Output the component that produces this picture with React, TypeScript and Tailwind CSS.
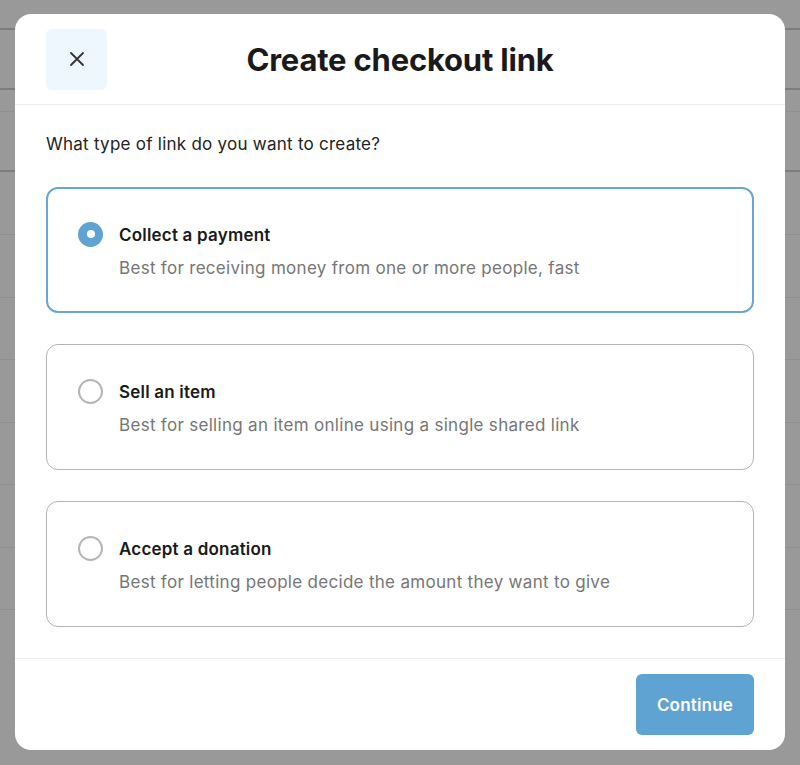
import { useState } from 'react';

const OPTIONS = [
  { id: 'payment', title: 'Collect a payment', desc: 'Best for receiving money from one or more people, fast' },
  { id: 'item', title: 'Sell an item', desc: 'Best for selling an item online using a single shared link' },
  { id: 'donation', title: 'Accept a donation', desc: 'Best for letting people decide the amount they want to give' },
];

// faint table rows of the page behind the overlay
const BG_ROWS = [
  { h: 30, dark: true },
  { h: 60, dark: true },
  { h: 22, dark: false },
  { h: 60, dark: true },
  { h: 63, dark: false },
  { h: 63, dark: false },
  { h: 62, dark: false },
  { h: 63, dark: false },
  { h: 62, dark: false },
  { h: 63, dark: false },
  { h: 62, dark: false },
];

export default function App() {
  const [selected, setSelected] = useState('payment');

  return (
    <div
      className="relative h-[765px] w-[800px] overflow-hidden bg-[#999999]"
      style={{ fontFamily: 'Inter, "Noto Sans", sans-serif' }}
    >
      <div className="flex flex-col">
        {BG_ROWS.map((row, i) => (
          <div
            key={i}
            style={{ height: row.h }}
            className={row.dark ? 'border-b-2 border-[#7d7d7d]' : 'border-b border-[#8f8f8f]'}
          />
        ))}
      </div>

      <div className="absolute left-[15px] top-[14px] flex h-[736px] w-[770px] flex-col rounded-[16px] bg-white">
        <div className="flex h-[91px] items-center border-b border-[#ececec] px-[31px]">
          <button
            type="button"
            className="flex h-[61px] w-[61px] items-center justify-center rounded-[6px] bg-[#eef7fd] text-[#333]"
          >
            <svg width="16" height="16" viewBox="0 0 16 16" fill="none" stroke="currentColor" strokeWidth="1.8" strokeLinecap="round">
              <path d="M2 2l12 12M14 2L2 14" />
            </svg>
          </button>
          <h1 className="flex-1 pr-[61px] pt-[3px] text-center text-[31px] font-bold tracking-[-0.2px] text-[#1a1a1a]">
            Create checkout link
          </h1>
        </div>

        <div className="flex flex-1 flex-col px-[31px] pt-[27px]">
          <p className="text-[17px] tracking-[0.25px] text-[#222]">What type of link do you want to create?</p>
          <div className="mt-[29px] flex flex-col gap-[31px]">
            {OPTIONS.map((opt) => {
              const active = selected === opt.id;
              return (
                <button
                  key={opt.id}
                  type="button"
                  onClick={() => setSelected(opt.id)}
                  className={`flex h-[126px] w-full items-start rounded-[12px] bg-white text-left ${
                    active ? 'border-2 border-[#6aa6d4] px-[30px] pt-[33px]' : 'border border-[#b4b4b4] px-[31px] pt-[34px]'
                  }`}
                >
                  {active ? (
                    <span className="flex h-[25px] w-[25px] shrink-0 items-center justify-center rounded-full bg-[#5fa3d2]">
                      <span className="h-[8px] w-[8px] rounded-full bg-white" />
                    </span>
                  ) : (
                    <span className="h-[25px] w-[25px] shrink-0 rounded-full border-2 border-[#b5b5b5]" />
                  )}
                  <span className="ml-[16px] flex flex-col pt-[2px]">
                    <span className="text-[17px] font-semibold leading-[22px] tracking-[0.2px] text-[#1a1a1a]">
                      {opt.title}
                    </span>
                    <span className="mt-[11px] text-[17px] leading-[22px] tracking-[0.3px] text-[#767676]">
                      {opt.desc}
                    </span>
                  </span>
                </button>
              );
            })}
          </div>
        </div>

        <div className="flex h-[92px] items-center justify-end border-t border-[#ececec] px-[31px]">
          <button
            type="button"
            className="h-[61px] w-[118px] rounded-[6px] bg-[#5fa3d2] pt-[2px] text-[17px] font-semibold tracking-[0.2px] text-white"
          >
            Continue
          </button>
        </div>
      </div>
    </div>
  );
}
